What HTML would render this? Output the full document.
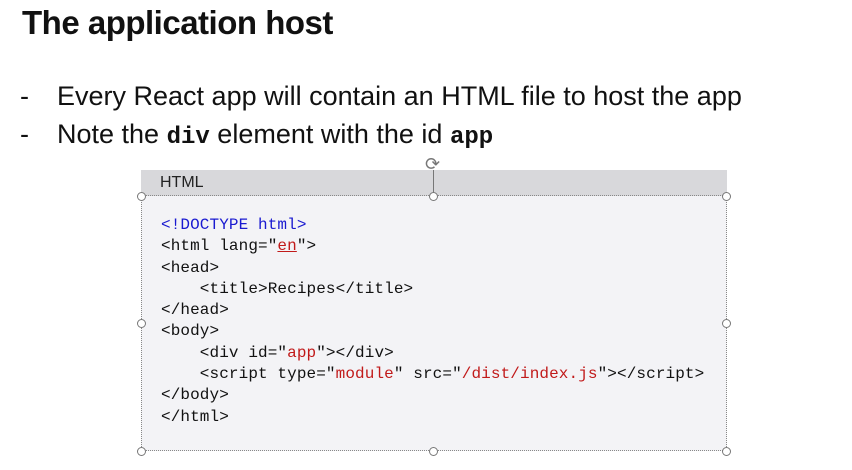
<!DOCTYPE html>
<html><head><style>
body{margin:0;width:852px;height:470px;background:#fff;position:relative;overflow:hidden;font-family:"Liberation Sans",sans-serif;color:#111}
.t{position:absolute;left:22px;top:4px;font-size:33px;font-weight:bold;letter-spacing:-0.5px}
.b{position:absolute;left:20px;font-size:27px;white-space:nowrap}
.b span.d{display:inline-block;width:37px}
.m{font-family:"Liberation Mono",monospace;font-weight:bold;font-size:24px}
.box{position:absolute;left:141px;top:170px;width:586px;height:281px;background:#f3f3f6;border:1px dotted #888;box-sizing:border-box}
.hd{position:absolute;left:141px;top:170px;width:586px;height:26px;background:#d8d8db;border-bottom:1px dotted #888;box-sizing:border-box}
.hd span{position:absolute;left:19px;top:4px;font-size:16px;color:#222}
pre{position:absolute;left:161px;top:215px;margin:0;font-family:"Liberation Mono",monospace;font-size:16px;line-height:21.3px;color:#111;letter-spacing:0.1px}
.k{color:#1a1ad0}.r{color:#c11a1a}
.h{position:absolute;width:9px;height:9px;border:1px solid #777;border-radius:50%;background:#fff;box-sizing:border-box}
</style></head><body>
<div class="t">The application host</div>
<div class="b" style="top:81px"><span class="d">-</span>Every React app will contain an HTML file to host the app</div>
<div class="b" style="top:119px"><span class="d">-</span>Note the <span class="m">div</span> element with the id <span class="m">app</span></div>
<div class="box"></div>
<div class="hd"><span>HTML</span></div>
<div style="position:absolute;left:433px;top:170px;width:1px;height:26px;background:#777"></div>
<div style="position:absolute;left:425px;top:154px;font-size:18px;color:#777">⟳</div>
<pre><span class="k">&lt;!DOCTYPE html&gt;</span>
&lt;html lang="<span class="r" style="text-decoration:underline">en</span>"&gt;
&lt;head&gt;
    &lt;title&gt;Recipes&lt;/title&gt;
&lt;/head&gt;
&lt;body&gt;
    &lt;div id="<span class="r">app</span>"&gt;&lt;/div&gt;
    &lt;script type="<span class="r">module</span>" src="<span class="r">/dist/index.js</span>"&gt;&lt;/script&gt;
&lt;/body&gt;
&lt;/html&gt;</pre>
<div class="h" style="left:137px;top:192px"></div>
<div class="h" style="left:429px;top:192px"></div>
<div class="h" style="left:722px;top:192px"></div>
<div class="h" style="left:137px;top:319px"></div>
<div class="h" style="left:722px;top:319px"></div>
<div class="h" style="left:137px;top:447px"></div>
<div class="h" style="left:429px;top:447px"></div>
<div class="h" style="left:722px;top:447px"></div>
</body></html>
